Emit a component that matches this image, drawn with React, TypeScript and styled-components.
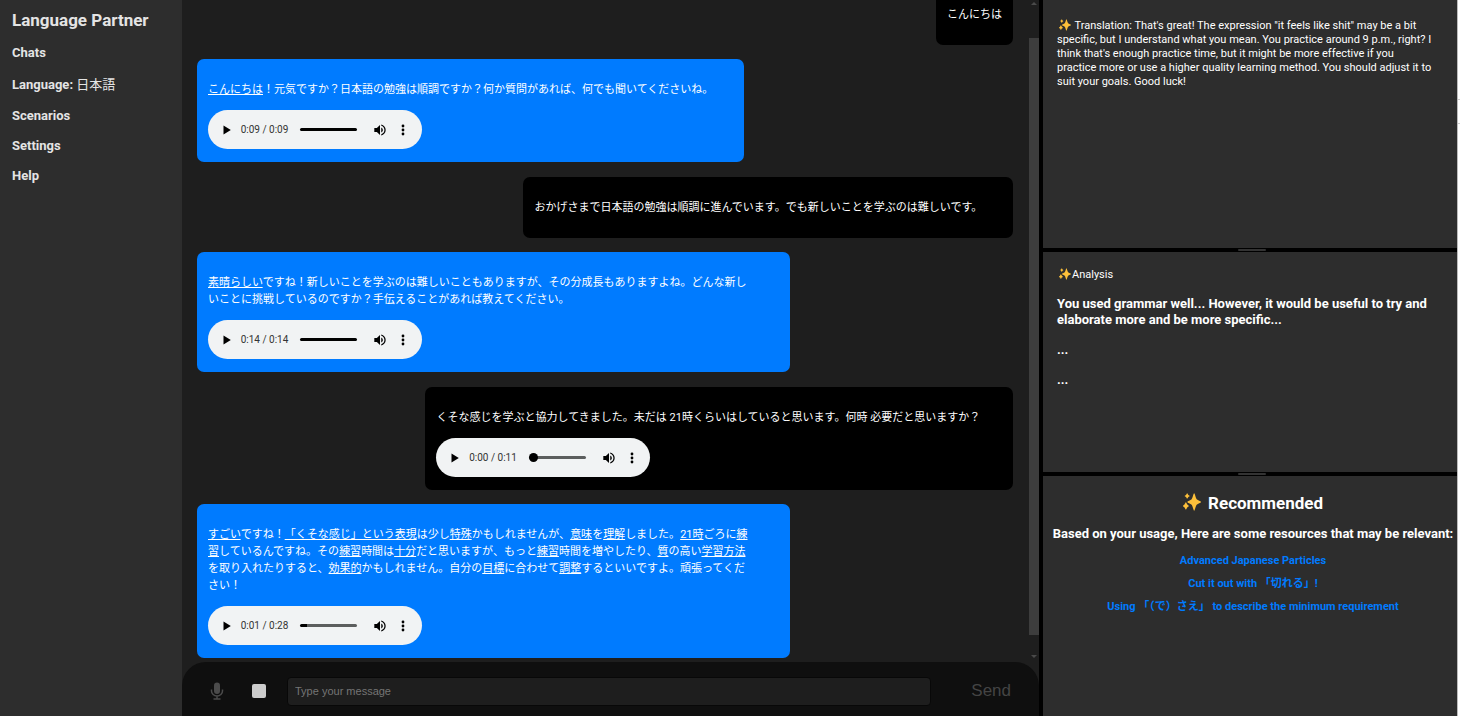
import React, { useState } from "react";
import styled, { createGlobalStyle, css } from "styled-components";

const GlobalStyle = createGlobalStyle`
  *, *::before, *::after { box-sizing: border-box; }
  body {
    margin: 0;
    background: #ffffff;
    color: #ffffff;
    font-family: Roboto, "Noto Sans CJK JP", sans-serif;
    font-size: 11px;
  }
  h1, h2, h3, p, ul { margin: 0; padding: 0; }
  ul { list-style: none; }
  button { border: 0; padding: 0; background: none; color: inherit; font: inherit; cursor: pointer; }
`;

const Page = styled.div`
  display: grid;
  grid-template-columns: 182px minmax(0, 1fr) 414px 3px;
  height: 100vh;
  overflow: hidden;
`;

/* Sidebar */

const Sidebar = styled.nav`
  padding: 10px 12px;
  background: #2d2d2d;
  color: #e4e4e4;
`;

const Brand = styled.h1`
  font-size: 17px;
  line-height: 20px;
  font-weight: 700;
`;

const Menu = styled.ul`
  display: flex;
  flex-direction: column;
  gap: 14px;
  margin-top: 15px;
`;

const MenuLink = styled.a<{ $tall?: boolean }>`
  display: block;
  color: inherit;
  font-size: 13px;
  font-weight: 700;
  line-height: ${(p) => (p.$tall ? "19px" : "16px")};
  text-decoration: none;
`;

const LanguageName = styled.span`
  font-weight: 400;
`;

/* Chat */

const Chat = styled.main`
  display: flex;
  flex-direction: column;
  min-width: 0;
  min-height: 0;
  border-right: 4px solid #000000;
  background: #1e1e1e;
`;

const History = styled.div`
  display: flex;
  flex: 1;
  min-height: 0;
`;

const Messages = styled.div`
  display: flex;
  flex: 1;
  flex-direction: column;
  justify-content: flex-end;
  min-width: 0;
  padding: 0 16px 4px 15px;
  overflow: hidden;
`;

const Scrollbar = styled.div`
  display: flex;
  flex-direction: column;
  align-items: center;
  justify-content: space-between;
  width: 10px;
  padding: 2px 0 4px;
`;

const ScrollArrow = styled.span<{ $down?: boolean }>`
  border: 3px solid transparent;
  border-top-width: ${(p) => (p.$down ? "3px" : "0")};
  border-bottom-width: ${(p) => (p.$down ? "0" : "3px")};
  ${(p) => (p.$down ? "border-top-color: #4a4a4a;" : "border-bottom-color: #4a4a4a;")}
`;

const ScrollThumb = styled.span`
  flex: 1;
  width: 100%;
  margin: 33px 0 20px;
  background: #3d3d3d;
`;

const Bubble = styled.article<{ $mine?: boolean; $width?: string }>`
  flex: none;
  width: ${(p) => p.$width ?? "auto"};
  padding: 11px;
  border-radius: 7px;
  ${(p) =>
    p.$mine
      ? css`
          align-self: flex-end;
          margin-top: 15px;
          background: #000000;
        `
      : css`
          align-self: flex-start;
          margin-top: 14px;
          background: #007bff;
        `}
`;

const Speech = styled.p`
  margin: 11px 0;
  line-height: 17px;
  white-space: nowrap;
`;

const Line = styled.span`
  display: block;
`;

const Player = styled.div`
  display: flex;
  align-items: center;
  width: 214px;
  height: 39px;
  margin: 12px 0 2px;
  padding: 0 13px;
  border-radius: 20px;
  background: #f1f3f4;
  color: #000000;
`;

const PlayerButton = styled.button`
  display: flex;
  align-items: center;
  justify-content: center;
  width: 12px;
  height: 16px;

  svg { display: block; }
`;

const Time = styled.span`
  width: 61px;
  padding-left: 8px;
  color: #333333;
  font-size: 10px;
  line-height: 14px;
  white-space: nowrap;
`;

const Seek = styled.input<{ $knob?: boolean }>`
  appearance: none;
  width: 57px;
  height: 9px;
  margin: 0 17px 0 8px;
  background: none;

  &::-webkit-slider-runnable-track {
    height: 3px;
    border-radius: 2px;
    background: linear-gradient(to right, #000000 var(--played), #5c5e5e var(--played));
  }
  &::-webkit-slider-thumb {
    appearance: none;
    width: ${(p) => (p.$knob ? "9px" : "1px")};
    height: ${(p) => (p.$knob ? "9px" : "3px")};
    margin-top: ${(p) => (p.$knob ? "-3px" : "0")};
    border-radius: 50%;
    background: ${(p) => (p.$knob ? "#000000" : "transparent")};
  }
`;

const MoreButton = styled(PlayerButton)`
  margin-left: 11px;
`;

/* Composer */

const Composer = styled.form`
  display: flex;
  align-items: center;
  height: 54px;
  padding: 4px 28px 0;
  border-radius: 24px 24px 0 0;
  background: #0f0f0f;
`;

const ToolButton = styled.button`
  display: flex;
  align-items: center;
  justify-content: center;
  width: 14px;
  height: 20px;
  color: #4b4b4b;
`;

const StopButton = styled(ToolButton)`
  margin: 0 21px 0 28px;
`;

const StopSquare = styled.span`
  flex: none;
  width: 14px;
  height: 14px;
  border-radius: 2px;
  background: #cccccc;
`;

const MessageInput = styled.input`
  flex: 1;
  min-width: 0;
  height: 29px;
  padding: 0 7px 1px;
  border: 1px solid #080808;
  border-radius: 4px;
  outline: 0;
  background: #1e1e1e;
  color: #ffffff;
  font: 11px "Liberation Sans", Arial, sans-serif;

  &::placeholder { color: #757575; }
`;

const SendButton = styled.button`
  margin-left: 40px;
  color: #444444;
  font: 17px "Liberation Sans", Arial, sans-serif;
`;

/* Right-hand panels */

const Panels = styled.aside`
  display: grid;
  grid-template-rows: 248fr 4px 220fr 4px 240fr;
  min-height: 0;
  background: #000000;
`;

const Panel = styled.section<{ $centered?: boolean }>`
  display: flex;
  flex-direction: column;
  align-items: ${(p) => (p.$centered ? "center" : "stretch")};
  min-width: 0;
  min-height: 0;
  padding: ${(p) => (p.$centered ? "17px 0 0 6px" : "16px 10px 0 14px")};
  overflow: hidden;
  background: #2d2d2d;
`;

const Divider = styled.div`
  display: flex;
  align-items: center;
  justify-content: center;
  padding-left: 4px;
`;

const Grip = styled.span`
  width: 28px;
  height: 2px;
  border-radius: 1px;
  background: #333333;
`;

const PanelText = styled.p<{ $first?: boolean }>`
  margin-top: ${(p) => (p.$first ? "3px" : "0")};
  font-size: 11px;
  line-height: 14px;
  white-space: nowrap;

  svg { margin: 0 1px 0 2px; }
`;

const Remark = styled.h3`
  margin-top: 14px;
  font-size: 13px;
  line-height: 16px;
`;

const Title = styled.h2`
  font-size: 17px;
  line-height: 20px;

  svg { margin-right: 3px; }
`;

const Lead = styled.h3`
  margin: 13px 0 11px;
  font-size: 13px;
  line-height: 16px;
  white-space: nowrap;
`;

const Resources = styled.ul`
  display: flex;
  flex-direction: column;
  align-items: center;
  gap: 7px;
`;

const ResourceLink = styled.a`
  display: block;
  color: #007bff;
  font-size: 11px;
  font-weight: 700;
  line-height: 16px;
  text-decoration: none;
`;

const PageEdge = styled.div`
  padding-top: 99px;
  border-left: 1px solid #bbbbbb;
  background: #ffffff;
`;

const EdgeBox = styled.div`
  height: 25px;
  border: solid #cccccc;
  border-width: 1px 0;
`;

const SparklesIcon = styled.svg`
  vertical-align: -2px;
`;

function Sparkles({ size }: { size: number }) {
  return (
    <SparklesIcon width={size} height={size} viewBox="0 0 25 25" fill="#fdc03a" aria-hidden="true">
      <path d="M15.500 0.500C16.500 0.500 17.500 7 19 8.800C20.500 10.300 25 11.300 25 12.500C25 13.700 20.500 14.700 19 16.200C17.500 18 16.500 24.500 15.500 24.500C14.500 24.500 13.500 18 12 16.200C10.500 14.700 6 13.700 6 12.500C6 11.300 10.500 10.300 12 8.800C13.500 7 14.500 0.500 15.500 0.500Z" />
      <path d="M5.800 0.500C6.400 0.500 6.800 2.300 7.400 2.900C8 3.500 9.300 3.600 9.300 4.200C9.300 4.800 8 4.900 7.400 5.500C6.800 6.100 6.400 7.800 5.800 7.800C5.200 7.800 4.800 6.100 4.200 5.500C3.600 4.900 2.300 4.800 2.300 4.200C2.300 3.600 3.600 3.500 4.200 2.900C4.800 2.300 5.200 0.500 5.800 0.500Z" />
      <path d="M4 13C4.700 13 5.200 15.300 5.900 16C6.600 16.700 8 17.200 8 18C8 18.800 6.600 19.300 5.900 20C5.200 20.700 4.700 23 4 23C3.300 23 2.800 20.700 2.100 20C1.400 19.300 0 18.800 0 18C0 17.200 1.400 16.700 2.100 16C2.800 15.300 3.300 13 4 13Z" />
    </SparklesIcon>
  );
}

function AudioPlayer({ label, time, played, knob }: { label: string; time: string; played: number; knob?: boolean }) {
  const [value, setValue] = useState(played);
  return (
    <Player role="group" aria-label={label}>
      <PlayerButton type="button" aria-label="Play">
        <svg width="8" height="10" viewBox="0 0 8 10">
          <path d="M0.500 0.500v9L7.800 5Z" />
        </svg>
      </PlayerButton>
      <Time>{time}</Time>
      <Seek
        type="range"
        aria-label="Seek"
        value={value}
        $knob={knob}
        onChange={(e) => setValue(Number(e.target.value))}
        style={{ "--played": `${value}%` } as React.CSSProperties}
      />
      <PlayerButton type="button" aria-label="Mute">
        <svg width="12" height="12" viewBox="2.500 2.500 19 19">
          <path d="M3 9v6h4l5 5V4L7 9H3zm13.500 3A4.500 4.500 0 0 0 14 7.970v8.050c1.480-.73 2.500-2.250 2.500-4.020zM14 3.230v2.060c2.890.86 5 3.540 5 6.710s-2.110 5.850-5 6.710v2.060c4.010-.91 7-4.490 7-8.770s-2.990-7.860-7-8.770z" />
        </svg>
      </PlayerButton>
      <MoreButton type="button" aria-label="More options">
        <svg width="4" height="12" viewBox="0 0 4 12">
          <circle cx="2" cy="2" r="1.400" />
          <circle cx="2" cy="6" r="1.400" />
          <circle cx="2" cy="10" r="1.400" />
        </svg>
      </MoreButton>
    </Player>
  );
}

export default function App() {
  return (
    <>
      <GlobalStyle />
      <Page>
        <Sidebar>
          <Brand>Language Partner</Brand>
          <Menu>
            <li><MenuLink href="#chats">Chats</MenuLink></li>
            <li><MenuLink href="#language" $tall>Language: <LanguageName lang="ja">日本語</LanguageName></MenuLink></li>
            <li><MenuLink href="#scenarios">Scenarios</MenuLink></li>
            <li><MenuLink href="#settings">Settings</MenuLink></li>
            <li><MenuLink href="#help">Help</MenuLink></li>
          </Menu>
        </Sidebar>

        <Chat>
          <History>
            <Messages lang="ja">
              <Bubble $mine>
                <Speech>こんにちは</Speech>
              </Bubble>
              <Bubble $width="67%">
                <Speech><u>こんにちは</u>！元気ですか？日本語の勉強は順調ですか？何か質問があれば、何でも聞いてくださいね。</Speech>
                <AudioPlayer label="Reply 1" time="0:09 / 0:09" played={100} />
              </Bubble>
              <Bubble $mine $width="60%">
                <Speech>おかげさまで日本語の勉強は順調に進んでいます。でも新しいことを学ぶのは難しいです。</Speech>
              </Bubble>
              <Bubble $width="calc(73% - 3px)">
                <Speech>
                  <Line><u>素晴らしい</u>ですね！新しいことを学ぶのは難しいこともありますが、その分成長もありますよね。どんな新し</Line>
                  <Line>いことに挑戦しているのですか？手伝えることがあれば教えてください。</Line>
                </Speech>
                <AudioPlayer label="Reply 2" time="0:14 / 0:14" played={100} />
              </Bubble>
              <Bubble $mine $width="72%">
                <Speech>くそな感じを学ぶと協力してきました。未だは 21時くらいはしていると思います。何時 必要だと思いますか？</Speech>
                <AudioPlayer label="Your recording" time="0:00 / 0:11" played={0} knob />
              </Bubble>
              <Bubble $width="calc(73% - 3px)">
                <Speech>
                  <Line><u>すごい</u>ですね！<u>「くそな感じ」という表現</u>は少し<u>特殊</u>かもしれませんが、<u>意味</u>を<u>理解</u>しました。<u>21時</u>ごろに<u>練</u></Line>
                  <Line><u>習</u>しているんですね。その<u>練習</u>時間は<u>十分</u>だと思いますが、もっと<u>練習</u>時間を増やしたり、<u>質</u>の高い<u>学習方法</u></Line>
                  <Line>を取り入れたりすると、<u>効果的</u>かもしれません。自分の<u>目標</u>に合わせて<u>調整</u>するといいですよ。頑張ってくだ</Line>
                  <Line>さい！</Line>
                </Speech>
                <AudioPlayer label="Reply 3" time="0:01 / 0:28" played={12} />
              </Bubble>
            </Messages>
            <Scrollbar aria-hidden="true">
              <ScrollArrow />
              <ScrollThumb />
              <ScrollArrow $down />
            </Scrollbar>
          </History>
          <Composer onSubmit={(e) => e.preventDefault()}>
            <ToolButton type="button" aria-label="Record">
              <svg width="14" height="18" viewBox="0 0 14 18" fill="none" stroke="currentColor">
                <rect x="4" y="0.500" width="6" height="11.500" rx="3" fill="currentColor" stroke="none" />
                <path d="M1.500 7.500v1.500a5.500 5 0 0 0 11 0V7.500M7 14v3M3.500 17h7" strokeWidth="1.500" />
              </svg>
            </ToolButton>
            <StopButton type="button" aria-label="Stop">
              <StopSquare />
            </StopButton>
            <MessageInput type="text" aria-label="Message" placeholder="Type your message" />
            <SendButton type="submit">Send</SendButton>
          </Composer>
        </Chat>

        <Panels>
          <Panel>
            <PanelText $first>
              <Sparkles size={12} /> Translation: That's great! The expression "it feels like shit" may be a bit<br />
              specific, but I understand what you mean. You practice around 9 p.m., right? I<br />
              think that's enough practice time, but it might be more effective if you<br />
              practice more or use a higher quality learning method. You should adjust it to<br />
              suit your goals. Good luck!
            </PanelText>
          </Panel>
          <Divider><Grip /></Divider>
          <Panel>
            <PanelText><Sparkles size={12} />Analysis</PanelText>
            <Remark>You used grammar well... However, it would be useful to try and elaborate more and be more specific...</Remark>
            <Remark>...</Remark>
            <Remark>...</Remark>
          </Panel>
          <Divider><Grip /></Divider>
          <Panel $centered>
            <Title><Sparkles size={18} /> Recommended</Title>
            <Lead>Based on your usage, Here are some resources that may be relevant:</Lead>
            <Resources>
              <li><ResourceLink href="#particles">Advanced Japanese Particles</ResourceLink></li>
              <li><ResourceLink href="#kireru">Cut it out with 「切れる」!</ResourceLink></li>
              <li><ResourceLink href="#sae">Using 「（で）さえ」 to describe the minimum requirement</ResourceLink></li>
            </Resources>
          </Panel>
        </Panels>
        <PageEdge><EdgeBox /></PageEdge>
      </Page>
    </>
  );
}
